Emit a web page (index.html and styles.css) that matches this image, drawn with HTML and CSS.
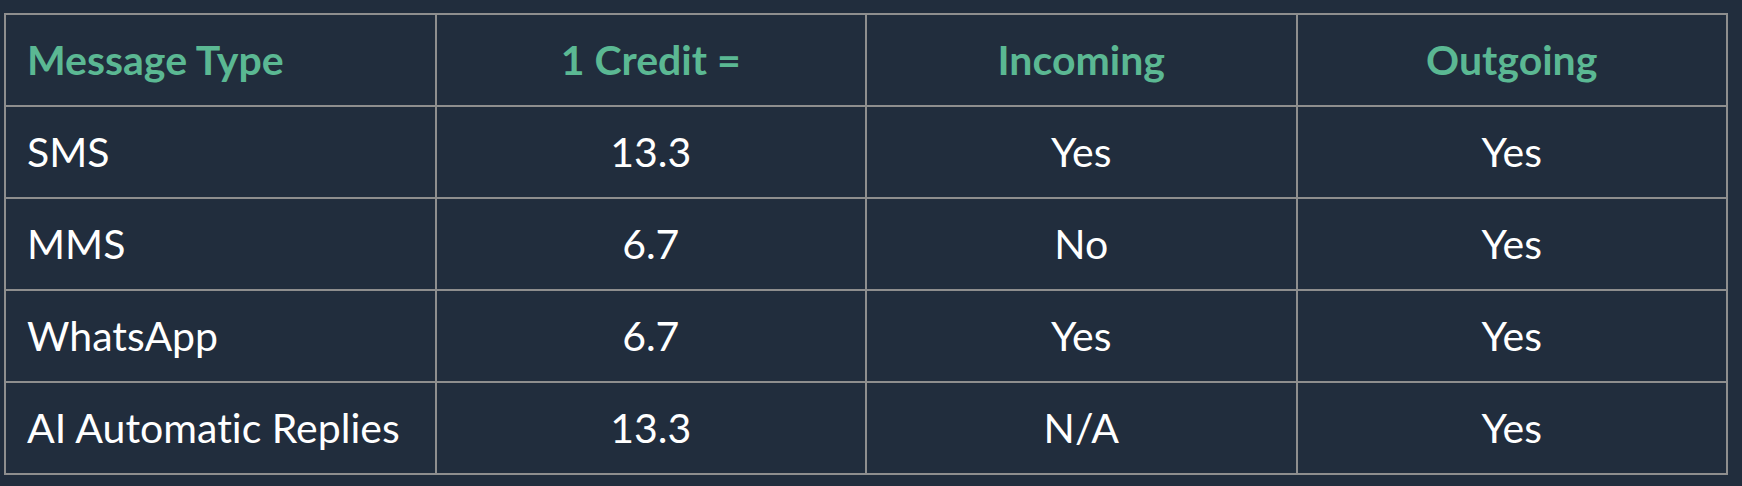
FILE: index.html
```html
<!DOCTYPE html>
<html>
<head>
<meta charset="utf-8">
<link rel="stylesheet" href="styles.css">
</head>
<body>
<div class="wrap">
<table class="credits">
  <thead>
    <tr>
      <th class="left">Message Type</th>
      <th>1 Credit =</th>
      <th>Incoming</th>
      <th>Outgoing</th>
    </tr>
  </thead>
  <tbody>
    <tr><td class="left">SMS</td><td>13.3</td><td>Yes</td><td>Yes</td></tr>
    <tr><td class="left">MMS</td><td>6.7</td><td>No</td><td>Yes</td></tr>
    <tr><td class="left">WhatsApp</td><td>6.7</td><td>Yes</td><td>Yes</td></tr>
    <tr><td class="left">AI Automatic Replies</td><td>13.3</td><td>N/A</td><td>Yes</td></tr>
  </tbody>
</table>
</div>
</body>
</html>
```
FILE: styles.css
```css
html, body {
  margin: 0;
  padding: 0;
  background: #212d3d;
}
.wrap {
  padding: 13px 4px;
}
.credits {
  width: 1724px;
  border-collapse: collapse;
  table-layout: fixed;
  font-family: Lato, "Liberation Sans", sans-serif;
  font-variant-ligatures: none;
}
.credits th,
.credits td {
  border: 2px solid #8e8e8e;
  height: 92px;
  padding: 0 21px;
  text-align: center;
  vertical-align: middle;
  font-size: 41px;
  line-height: 48px;
  box-sizing: border-box;
}
.credits th {
  color: #5bb893;
  font-weight: 700;
}
.credits td {
  color: #ffffff;
  font-weight: 400;
}
.credits .left {
  text-align: left;
}
```
